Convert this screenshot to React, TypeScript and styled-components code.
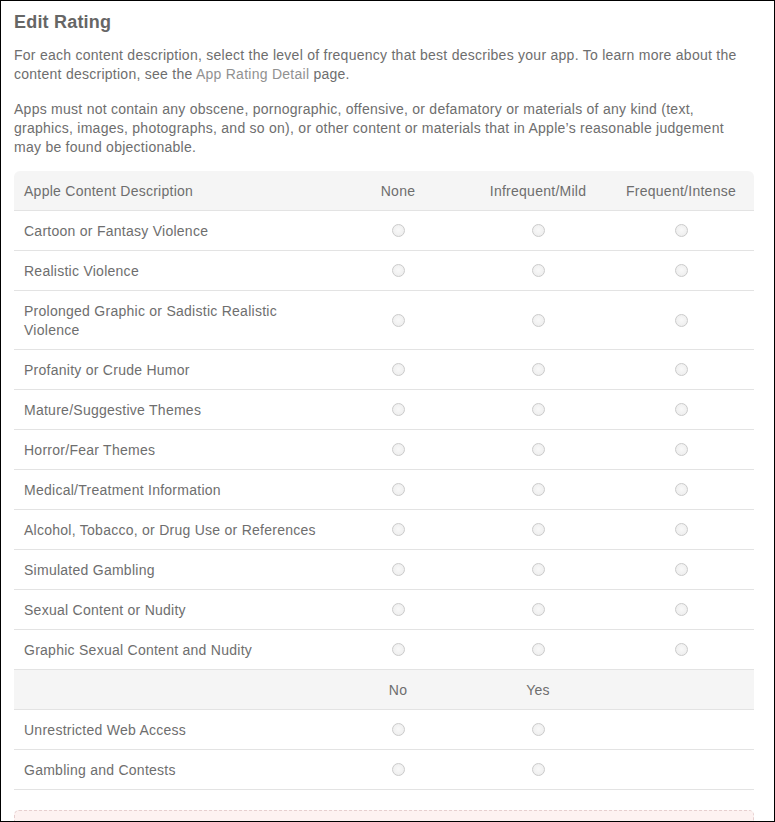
import React from "react";
import styled, { createGlobalStyle } from "styled-components";

const Global = createGlobalStyle`
  html, body { margin: 0; padding: 0; background: #fff; }
  body { font-family: "Liberation Sans", Arial, Helvetica, sans-serif; color: #6e6e6e; }
  * { box-sizing: border-box; }
`;

const Frame = styled.div`
  height: 100vh;
  border: 1px solid #000;
  padding: 10px 20px 0 13px;
  overflow: hidden;
`;

const Title = styled.h2`
  margin: 0;
  font-size: 18px;
  line-height: 22px;
  font-weight: bold;
  color: #666;
  letter-spacing: 0.2px;
`;

const Para = styled.p<{ $mt: number }>`
  margin: ${(p) => p.$mt}px 0 0;
  font-size: 14px;
  line-height: 19px;
  color: #6e6e6e;
  letter-spacing: 0.26px;
`;

const Link = styled.a`
  color: #919191;
  text-decoration: none;
`;

const Table = styled.div`
  margin-top: 14px;
  display: grid;
  grid-template-columns: 314px 140px 140px 146px;
  width: 740px;
`;

const Row = styled.div<{ $head?: boolean; $first?: boolean }>`
  display: contents;
  & > div {
    background: ${(p) => (p.$head ? "#f5f5f5" : "#fff")};
    border-bottom: 1px solid #e3e3e3;
  }
  ${(p) =>
    p.$first &&
    `
    & > div:first-child { border-top-left-radius: 6px; }
    & > div:last-child { border-top-right-radius: 6px; }
  `}
`;

const Cell = styled.div<{ $center?: boolean }>`
  padding: 11px 10px 9px;
  font-size: 14px;
  line-height: 19px;
  color: #6e6e6e;
  letter-spacing: 0.26px;
  display: flex;
  align-items: center;
  justify-content: ${(p) => (p.$center ? "center" : "flex-start")};
  white-space: ${(p) => (p.$center ? "nowrap" : "normal")};
`;

const Radio = styled.span`
  display: inline-block;
  width: 13px;
  height: 13px;
  margin-top: -2px;
  border-radius: 50%;
  border: 1px solid #cbcbcb;
  background: radial-gradient(circle at 50% 45%, #f9f9f9 0%, #efefef 70%, #e6e6e6 100%);
`;

const Notice = styled.div`
  margin-top: 20px;
  height: 60px;
  width: 740px;
  border: 1px dashed #e6cfcf;
  border-radius: 5px;
  background: #fdf2f1;
`;

const freq = [
  "Cartoon or Fantasy Violence",
  "Realistic Violence",
  "Prolonged Graphic or Sadistic Realistic Violence",
  "Profanity or Crude Humor",
  "Mature/Suggestive Themes",
  "Horror/Fear Themes",
  "Medical/Treatment Information",
  "Alcohol, Tobacco, or Drug Use or References",
  "Simulated Gambling",
  "Sexual Content or Nudity",
  "Graphic Sexual Content and Nudity",
];

const yesNo = ["Unrestricted Web Access", "Gambling and Contests"];

export default function App() {
  return (
    <>
      <Global />
      <Frame>
        <Title>Edit Rating</Title>
        <Para $mt={13}>
          For each content description, select the level of frequency that best describes your app. To learn more about
          the content description, see the <Link href="#">App Rating Detail</Link> page.
        </Para>
        <Para $mt={16}>
          Apps must not contain any obscene, pornographic, offensive, or defamatory or materials of any kind (text,
          graphics, images, photographs, and so on), or other content or materials that in Apple’s reasonable judgement
          may be found objectionable.
        </Para>
        <Table>
          <Row $head $first>
            <Cell>Apple Content Description</Cell>
            <Cell $center>None</Cell>
            <Cell $center>Infrequent/Mild</Cell>
            <Cell $center>Frequent/Intense</Cell>
          </Row>
          {freq.map((f) => (
            <Row key={f}>
              <Cell>{f}</Cell>
              <Cell $center><Radio /></Cell>
              <Cell $center><Radio /></Cell>
              <Cell $center><Radio /></Cell>
            </Row>
          ))}
          <Row $head>
            <Cell />
            <Cell $center>No</Cell>
            <Cell $center>Yes</Cell>
            <Cell />
          </Row>
          {yesNo.map((f) => (
            <Row key={f}>
              <Cell>{f}</Cell>
              <Cell $center><Radio /></Cell>
              <Cell $center><Radio /></Cell>
              <Cell />
            </Row>
          ))}
        </Table>
        <Notice />
      </Frame>
    </>
  );
}
